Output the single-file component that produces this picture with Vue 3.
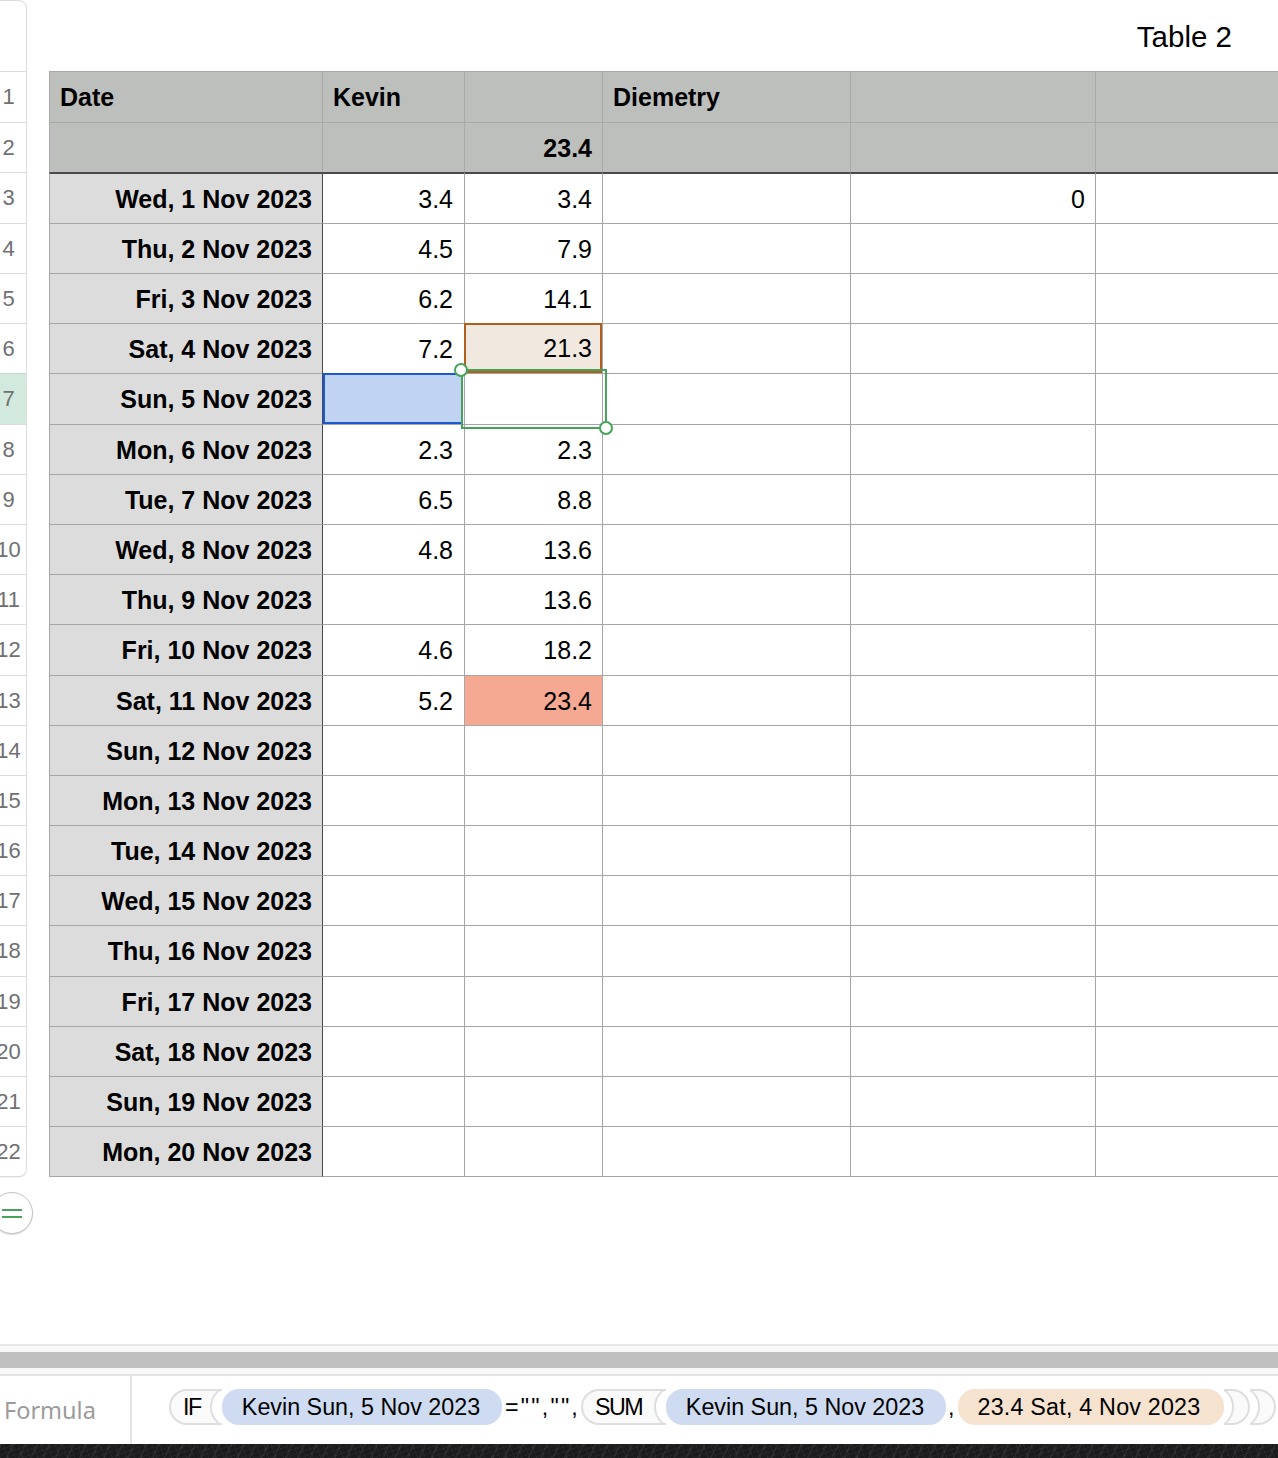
<script setup>
const tops = [71,122,172,223,273,323,373,424,474,524,574,624,675,725,775,825,875,925,976,1026,1076,1126,1177]
const heights = tops.slice(1).map((t, i) => t - tops[i])
const dates = ['Wed, 1 Nov 2023','Thu, 2 Nov 2023','Fri, 3 Nov 2023','Sat, 4 Nov 2023','Sun, 5 Nov 2023','Mon, 6 Nov 2023','Tue, 7 Nov 2023','Wed, 8 Nov 2023','Thu, 9 Nov 2023','Fri, 10 Nov 2023','Sat, 11 Nov 2023','Sun, 12 Nov 2023','Mon, 13 Nov 2023','Tue, 14 Nov 2023','Wed, 15 Nov 2023','Thu, 16 Nov 2023','Fri, 17 Nov 2023','Sat, 18 Nov 2023','Sun, 19 Nov 2023','Mon, 20 Nov 2023']
const kevin = ['3.4','4.5','6.2','7.2','','2.3','6.5','4.8','','4.6','5.2']
const total = ['3.4','7.9','14.1','21.3','','2.3','8.8','13.6','13.6','18.2','23.4']
const rows = dates.map((date, i) => ({
  date,
  kevin: kevin[i] || '',
  total: total[i] || '',
  last: i === 0 ? '0' : '',
  height: heights[i + 2],
  kevinClass: i === 4 ? 'sel-blue' : '',
  totalClass: i === 3 ? 'sel-orange' : i === 10 ? 'hot' : ''
}))
const gutter = heights.map((h, i) => ({ n: i + 1, h }))
</script>

<template>
  <div class="page">
    <div class="sheet">
      <div class="gutter">
        <div class="gutter-top"></div>
        <div
          v-for="g in gutter"
          :key="g.n"
          class="gutter-cell"
          :class="{ active: g.n === 7 }"
          :style="{ height: g.h + 'px' }"
        >{{ g.n }}</div>
      </div>
      <div class="table-col">
        <div class="title">Table 2</div>
        <div class="table">
          <div class="row head" :style="{ height: heights[0] + 'px' }">
            <div class="cell left">Date</div>
            <div class="cell left">Kevin</div>
            <div class="cell"></div>
            <div class="cell left">Diemetry</div>
            <div class="cell"></div>
            <div class="cell"></div>
          </div>
          <div class="row head head2" :style="{ height: heights[1] + 'px' }">
            <div class="cell"></div>
            <div class="cell"></div>
            <div class="cell">23.4</div>
            <div class="cell"></div>
            <div class="cell"></div>
            <div class="cell"></div>
          </div>
          <div v-for="r in rows" :key="r.date" class="row body" :style="{ height: r.height + 'px' }">
            <div class="cell date">{{ r.date }}</div>
            <div class="cell kev" :class="r.kevinClass">{{ r.kevin }}</div>
            <div class="cell" :class="r.totalClass">{{ r.total }}</div>
            <div class="cell"></div>
            <div class="cell">{{ r.last }}</div>
            <div class="cell"></div>
          </div>
          <div class="formula-range">
            <span class="handle tl"></span>
            <span class="handle br"></span>
          </div>
        </div>
      </div>
    </div>

    <div class="equals"><span></span><span></span></div>

    <div class="spacer"></div>

    <div class="scrollbar"><div class="thumb"></div></div>

    <div class="formula-bar">
      <div class="formula-label">Formula</div>
      <div class="tokens">
        <span class="fn fn-if">IF</span>
        <span class="pill blue first">Kevin Sun, 5 Nov 2023</span>
        <span class="plain eq">="",""<i>,</i></span>
        <span class="fn fn-sum">SUM</span>
        <span class="pill blue second">Kevin Sun, 5 Nov 2023</span>
        <span class="plain comma">,</span>
        <span class="pill orange">23.4 Sat, 4 Nov 2023</span>
        <span class="close"></span>
        <span class="close"></span>
      </div>
    </div>
    <div class="desktop"></div>
  </div>
</template>

<style scoped>
.page {
  position: relative;
  width: 1278px;
  height: 1458px;
  display: flex;
  flex-direction: column;
  background: #fff;
  overflow: hidden;
  font-family: "Liberation Sans", Arial, sans-serif;
  color: #000;
}
.sheet {
  display: flex;
  height: 1177px;
  flex: none;
}
.gutter {
  width: 35px;
  margin-left: -9px;
  margin-right: 22px;
  flex: none;
  border-right: 1px solid #dcdcdc;
  border-bottom: 1px solid #dcdcdc;
  border-radius: 0 8px 8px 0;
  box-shadow: 0 1px 1px rgba(0,0,0,.06);
  box-sizing: content-box;
}
.gutter-top {
  height: 71px;
  border-top: 1px solid #dcdcdc;
  border-radius: 0 8px 0 0;
  box-sizing: border-box;
}
.gutter-cell {
  box-sizing: border-box;
  border-top: 1px solid #dcdcdc;
  display: flex;
  align-items: center;
  justify-content: center;
  font-size: 22px;
  color: #707072;
}
.gutter-cell.active {
  background: #d2e9dd;
  border-top-color: #c3d8cd;
}
.table-col {
  flex: 1;
  min-width: 0;
  display: flex;
  flex-direction: column;
}
.title {
  height: 71px;
  box-sizing: border-box;
  flex: none;
  text-align: right;
  padding: 20px 46px 0 0;
  font-size: 29.5px;
  line-height: 34px;
}
.table {
  position: relative;
  width: 1229px;
}
.row {
  display: grid;
  grid-template-columns: 273px 142px 138px 248px 245px 183px;
  box-sizing: border-box;
}
.cell {
  box-sizing: border-box;
  display: flex;
  align-items: center;
  justify-content: flex-end;
  padding: 1px 10px 0 0;
  font-size: 25px;
  border-left: 1px solid #a6a6a6;
  border-top: 1px solid #a6a6a6;
  min-width: 0;
  white-space: nowrap;
}
.cell.kev {
  padding-right: 11px;
}
.head .cell {
  background: #bdbfbd;
  border-top-color: #a8a9a8;
  border-left-color: #a8a9a8;
  font-weight: 700;
}
.head .cell.left {
  justify-content: flex-start;
  padding-left: 10px;
  padding-top: 0;
}
.head2 + .body .cell {
  border-top: 2px solid #4a4a4a;
}
.date {
  background: #dcdcdc;
  font-weight: 700;
}
.date + .cell {
  border-left: 1px solid #4a4a4a;
}
.sel-blue {
  background: #c0d3f3;
  box-shadow: inset 0 0 0 2px #1b5ad6;
  border: 0;
  margin-right: 1px;
}
.sel-orange {
  background: #f1e8df;
  box-shadow: inset 0 0 0 2px #b05f1e;
  border: 0;
}
.hot {
  background: #f5a892;
}
.body:nth-last-child(2) .cell {
  border-bottom: 1px solid #a6a6a6;
}
.formula-range {
  position: absolute;
  left: 412px;
  top: 298px;
  width: 146px;
  height: 60px;
  box-sizing: border-box;
  border: 2px solid #46a35a;
}
.handle {
  position: absolute;
  width: 14px;
  height: 14px;
  box-sizing: border-box;
  border: 2px solid #46a35a;
  border-radius: 50%;
  background: #fff;
}
.handle.tl { left: -9px; top: -8px; }
.handle.br { right: -8px; bottom: -8px; }
.equals {
  position: absolute;
  left: -9px;
  top: 1192px;
  width: 42px;
  height: 42px;
  box-sizing: border-box;
  border: 1px solid #c4c4c4;
  border-radius: 50%;
  background: #fff;
  box-shadow: 0 1px 1px rgba(0,0,0,.15);
  display: flex;
  flex-direction: column;
  align-items: center;
  justify-content: center;
  gap: 5px;
}
.equals span {
  display: block;
  width: 20px;
  height: 2px;
  background: #46a35a;
}
.spacer { flex: 1; }
.scrollbar {
  flex: none;
  height: 32px;
  box-sizing: border-box;
  border-top: 2px solid #e8e8e8;
  border-bottom: 2px solid #e4e4e4;
  background: #f8f8f8;
  padding-top: 6px;
}
.thumb {
  height: 16px;
  background: #c0c0c0;
}
.formula-bar {
  flex: none;
  height: 68px;
  display: flex;
  background: #fff;
}
.formula-label {
  width: 132px;
  flex: none;
  box-sizing: border-box;
  border-right: 2px solid #e5e5e5;
  padding: 18px 0 0 4px;
  font-family: "Noto Sans", "Liberation Sans", sans-serif;
  font-size: 23.5px;
  line-height: 32px;
  color: #9b9b9b;
}
.tokens {
  display: flex;
  align-items: flex-start;
  padding: 13px 0 0 37px;
  font-size: 23.3px;
  line-height: 36px;
  white-space: nowrap;
}
.fn {
  position: relative;
  height: 36px;
  box-sizing: border-box;
  border: 2px solid #dedede;
  border-right: 0;
  border-radius: 18px 0 0 18px;
  background: #fafafa;
  overflow: hidden;
  letter-spacing: -1.5px;
  line-height: 33px;
  flex: none;
}
.fn::after {
  content: "";
  position: absolute;
  right: -32px;
  top: -6px;
  width: 44px;
  height: 44px;
  box-sizing: border-box;
  border: 2px solid #dedede;
  border-radius: 50%;
  background: #fff;
}
.fn-if { width: 53px; padding-left: 12px; }
.fn-sum { width: 85px; padding-left: 12px; margin-left: 4px; }
.pill {
  height: 36px;
  border-radius: 17px;
  flex: none;
  text-align: center;
  box-sizing: border-box;
}
.pill.blue { background: #cfdbf1; width: 280px; padding-right: 2px; }
.pill.orange { background: #f5e2cf; width: 266px; padding-right: 4px; letter-spacing: .2px; }
.plain { flex: none; }
.eq { width: 75px; padding-left: 3px; box-sizing: border-box; letter-spacing: 2.2px; }
.eq i { font-style: normal; }
.comma { width: 12px; padding-left: 2px; box-sizing: border-box; }
.close {
  position: relative;
  width: 26px;
  height: 36px;
  flex: none;
  box-sizing: border-box;
  border: 2px solid #dedede;
  border-left: 0;
  border-radius: 0 18px 18px 0;
  background: #fafafa;
  overflow: hidden;
}
.close::before {
  content: "";
  position: absolute;
  left: -34px;
  top: -6px;
  width: 44px;
  height: 44px;
  border-radius: 50%;
  background: #fff;
  box-sizing: border-box;
  border: 2px solid #dedede;
}
.desktop {
  flex: none;
  height: 14px;
  background-color: #1b1b1d;
  background-image: repeating-linear-gradient(115deg, rgba(255,255,255,.05) 0 2px, transparent 2px 11px), repeating-linear-gradient(70deg, rgba(255,255,255,.04) 0 1px, transparent 1px 7px), repeating-linear-gradient(160deg, rgba(255,255,255,.04) 0 1px, transparent 1px 5px);
}
</style>
